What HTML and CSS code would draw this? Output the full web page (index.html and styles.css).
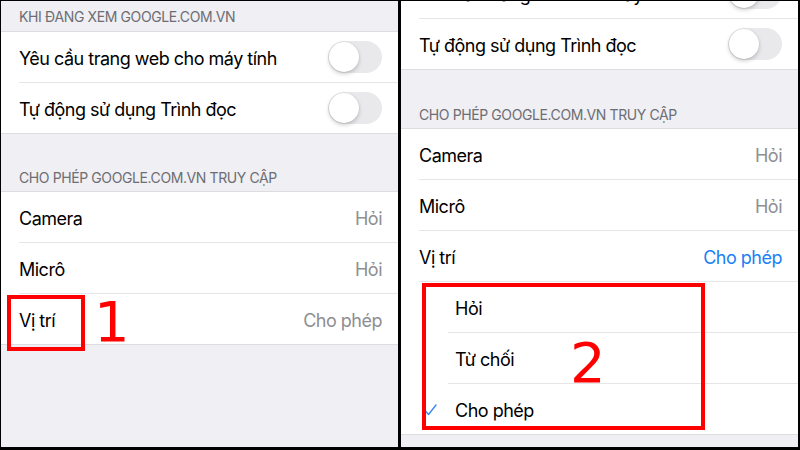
FILE: index.html
```html
<!DOCTYPE html>
<html lang="vi">
  <head>
    <meta charset="utf-8">
    <title>Cài đặt trang web</title>
    <link rel="stylesheet" href="styles.css">
  </head>
  <body>
    <div class="screens">
      <!-- Bước 1: mở mục Vị trí -->
      <div class="screen">
        <div class="group-head top">KHI ĐANG XEM GOOGLE.COM.VN</div>
        <ul class="group">
          <li class="row"><div class="cell"><span class="label">Yêu cầu trang web cho máy tính</span><span class="switch"></span></div></li>
          <li class="row"><div class="cell"><span class="label">Tự động sử dụng Trình đọc</span><span class="switch"></span></div></li>
        </ul>
        <div class="group-head">CHO PHÉP GOOGLE.COM.VN TRUY CẬP</div>
        <ul class="group">
          <li class="row"><div class="cell"><span class="label">Camera</span><span class="value">Hỏi</span></div></li>
          <li class="row"><div class="cell"><span class="label">Micrô</span><span class="value">Hỏi</span></div></li>
          <li class="row"><div class="cell"><span class="label">Vị trí</span><span class="value">Cho phép</span></div></li>
        </ul>
        <div class="mark mark-1"></div>
        <div class="step step-1">1</div>
      </div>

      <!-- Bước 2: chọn quyền truy cập -->
      <div class="screen">
        <ul class="group scrolled">
          <li class="row"><div class="cell"><span class="label">Yêu cầu trang web cho máy tính</span><span class="switch"></span></div></li>
          <li class="row"><div class="cell"><span class="label">Tự động sử dụng Trình đọc</span><span class="switch"></span></div></li>
        </ul>
        <div class="group-head tall">CHO PHÉP GOOGLE.COM.VN TRUY CẬP</div>
        <ul class="group">
          <li class="row"><div class="cell"><span class="label">Camera</span><span class="value">Hỏi</span></div></li>
          <li class="row"><div class="cell"><span class="label">Micrô</span><span class="value">Hỏi</span></div></li>
          <li class="row"><div class="cell"><span class="label">Vị trí</span><span class="value active">Cho phép</span></div></li>
          <li class="row option"><div class="cell"><span class="label">Hỏi</span></div></li>
          <li class="row option"><div class="cell"><span class="label">Từ chối</span></div></li>
          <li class="row option checked">
            <svg class="check" width="13" height="12" viewBox="0 0 13 12">
              <path d="M1 6.5 L4.5 10.5 L12 1" fill="none" stroke="#3a87f7" stroke-width="1.4" stroke-linecap="round" stroke-linejoin="round"/>
            </svg>
            <div class="cell"><span class="label">Cho phép</span></div>
          </li>
        </ul>
        <div class="mark mark-2"></div>
        <div class="step step-2">2</div>
      </div>
    </div>
  </body>
</html>
```

FILE: styles.css
```css
* {
  box-sizing: border-box;
}

body {
  margin: 0;
  background-color: #000;
  font-family: Inter, "Noto Sans", sans-serif;
}

.screens {
  display: flex;
  gap: 3px;
  width: 800px;
  height: 450px;
  padding: 1px 2px 3px 1px;
}

.screen {
  position: relative;
  flex: 1;
  overflow: hidden;
  background-color: #efeff4;
}

.group-head {
  height: 58px;
  padding: 0 0 4px 18px;
  display: flex;
  align-items: flex-end;
  font-size: 14px;
  line-height: 18px;
  letter-spacing: -0.4px;
  color: #6d6d72;
  border-bottom: 1px solid #dcdce1;
}

.group-head.top {
  height: 31px;
  padding-bottom: 5px;
}

.group-head.tall {
  height: 59px;
}

.group {
  list-style: none;
  margin: 0;
  padding: 0;
  background-color: #fff;
  border-bottom: 1px solid #dcdce1;
}

.group.scrolled {
  margin-top: -33px;
}

.row {
  height: 51px;
  padding-left: 18px;
  display: flex;
}

.row:last-child {
  height: 50px;
}

.cell {
  flex: 1;
  display: flex;
  align-items: center;
  justify-content: space-between;
  padding-top: 2px;
  padding-right: 16px;
  border-bottom: 1px solid #e6e6ea;
  font-size: 18px;
  letter-spacing: -0.5px;
  color: #000;
}

.row:last-child .cell {
  border-bottom: none;
}

.value {
  color: #8e8e93;
}

.value.active {
  color: #1a7ff5;
}

.row.option {
  position: relative;
  padding-left: 47px;
}

.row.option .cell {
  padding-left: 7px;
}

.check {
  position: absolute;
  left: 23px;
  top: 20px;
}

/* off switch */
.switch {
  position: relative;
  width: 54px;
  height: 32px;
  margin-top: -2px;
  border-radius: 16px;
  background-color: #e9e9eb;
}

.switch::after {
  content: "";
  position: absolute;
  top: 1px;
  left: 1px;
  width: 30px;
  height: 30px;
  border-radius: 50%;
  background-color: #fff;
  box-shadow: 0 2px 4px rgba(0, 0, 0, 0.2), 0 0 0 0.5px rgba(0, 0, 0, 0.06);
}

/* red annotation boxes and step numbers */
.mark {
  position: absolute;
  border: 4px solid #f00;
}

.mark-1 {
  left: 6px;
  top: 294px;
  width: 78px;
  height: 56px;
}

.mark-2 {
  left: 21px;
  top: 282px;
  width: 283px;
  height: 147px;
}

.step {
  position: absolute;
  font-family: "DejaVu Sans", sans-serif;
  font-size: 56px;
  line-height: 56px;
  color: #f00;
}

.step-1 {
  left: 93px;
  top: 293px;
}

.step-2 {
  left: 169px;
  top: 334px;
}
```
